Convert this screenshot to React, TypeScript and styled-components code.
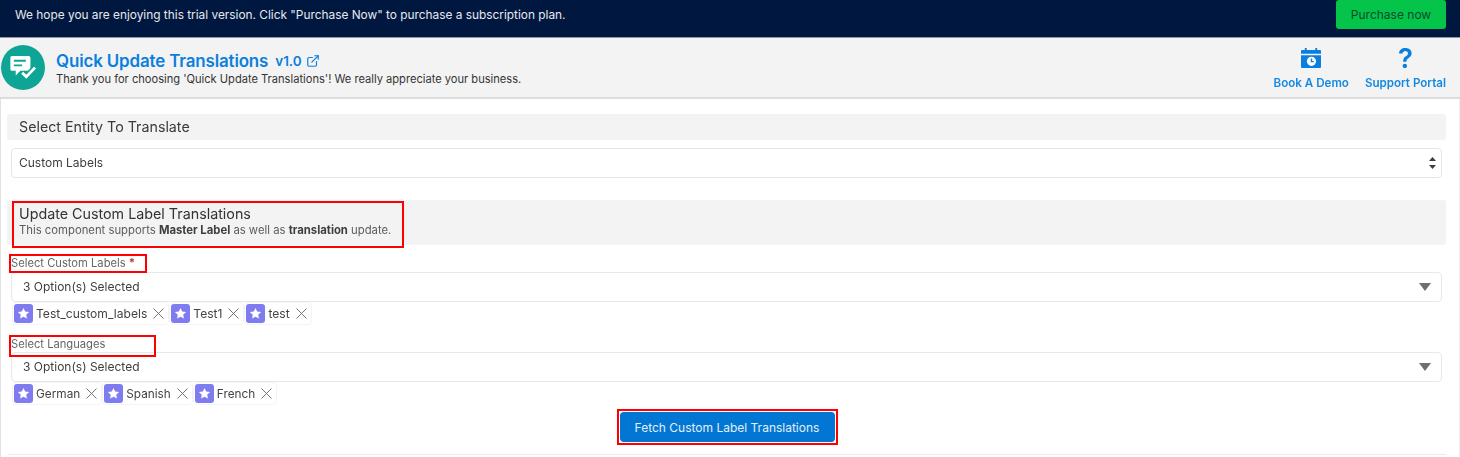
import React from 'react';
import styled, { createGlobalStyle } from 'styled-components';
import { X, ExternalLink } from 'lucide-react';

const FONT = '"Inter", "Liberation Sans", Arial, sans-serif';

const GlobalStyle = createGlobalStyle`
  html, body {
    margin: 0;
    padding: 0;
    background: #fff;
    font-family: ${FONT};
    color: #3e3e3c;
    overflow: hidden;
  }
  * { box-sizing: border-box; }
`;

const StarBadge = () => (
  <S.Badge>
    <svg width="13" height="13" viewBox="0 0 24 24" fill="#fff">
      <path d="M12 1.8l3.1 6.6 7.2.9-5.3 5 1.4 7.1L12 18l-6.4 3.4L7 14.300l-5.300-5 7.200-.9z" />
    </svg>
  </S.Badge>
);

const Pill = ({ text }: { text: string }) => (
  <S.Pill>
    <StarBadge />
    <S.PillText>{text}</S.PillText>
    <X size={19} color="#706e6b" strokeWidth={1.2} />
  </S.Pill>
);

const AppLogo = () => (
  <S.Logo>
    <svg width="30" height="28" viewBox="0 0 30 28">
      <path d="M2 0h18a2 2 0 0 1 2 2v12a2 2 0 0 1-2 2h-9l-5 5v-5H2a2 2 0 0 1-2-2V2a2 2 0 0 1 2-2z" fill="#fff" />
      <path d="M4 5h13M4 10h9" stroke="#0fa594" strokeWidth="2" />
      <path d="M13 18l4.500 4.500L27 12.500" fill="none" stroke="#0fa594" strokeWidth="6.500" />
      <path d="M13 18l4.500 4.500L27 12.500" fill="none" stroke="#fff" strokeWidth="3" />
    </svg>
  </S.Logo>
);

const CalendarIcon = () => (
  <svg width="20" height="20" viewBox="0 0 21 21">
    <path
      fill="#0b7fdd"
      fillRule="evenodd"
      d="M4 0h2v2h9V0h2v2h3a1 1 0 0 1 1 1v3H0V3a1 1 0 0 1 1-1h3zM0 7.500h21V20a1 1 0 0 1-1 1H1a1 1 0 0 1-1-1z"
    />
    <circle cx="11" cy="14" r="4.800" fill="#fff" />
    <path d="M11 11v3.300h2.400" fill="none" stroke="#0b7fdd" strokeWidth="1.500" />
  </svg>
);

const DownArrow = () => (
  <svg width="12" height="8" viewBox="0 0 12 8">
    <path d="M0 0h12L6 8z" fill="#706e6b" />
  </svg>
);

const App = () => {
  return (
    <S.Page>
      <GlobalStyle />
      <S.Banner>
        <S.BannerText>We hope you are enjoying this trial version. Click "Purchase Now" to purchase a subscription plan.</S.BannerText>
        <S.PurchaseButton>Purchase now</S.PurchaseButton>
      </S.Banner>
      <S.Header>
        <AppLogo />
        <S.TitleBlock>
          <S.TitleRow>
            <S.Title>Quick Update Translations</S.Title>
            <S.Version>v1.0</S.Version>
            <ExternalLink size={14} color="#0b7fdd" strokeWidth={2} />
          </S.TitleRow>
          <S.Subtitle>Thank you for choosing 'Quick Update Translations'! We really appreciate your business.</S.Subtitle>
        </S.TitleBlock>
        <S.HeaderActions>
          <S.HeaderAction>
            <S.ActionIcon><CalendarIcon /></S.ActionIcon>
            Book A Demo
          </S.HeaderAction>
          <S.HeaderAction>
            <S.QuestionMark>?</S.QuestionMark>
            Support Portal
          </S.HeaderAction>
        </S.HeaderActions>
      </S.Header>
      <S.Content>
        <S.EntityHeading>Select Entity To Translate</S.EntityHeading>
        <S.SelectBox>
          Custom Labels
          <S.Stepper>
            <svg width="7" height="14" viewBox="0 0 7 14">
              <path d="M3.500 1L7 5H0zM3.500 13L0 9h7z" fill="#3e3e3c" />
            </svg>
          </S.Stepper>
        </S.SelectBox>
        <S.UpdateHeading>
          <S.Annotated>
            <S.UpdateTitle>Update Custom Label Translations</S.UpdateTitle>
            <S.UpdateNote>
              This component supports <b>Master Label</b> as well as <b>translation</b> update.
            </S.UpdateNote>
          </S.Annotated>
        </S.UpdateHeading>
        <S.FieldLabel $top={11}>
          Select Custom Labels <S.Required>*</S.Required>
          <S.LabelMark $width={138} $height={19} />
        </S.FieldLabel>
        <S.Combo>
          3 Option(s) Selected
          <DownArrow />
        </S.Combo>
        <S.PillRow $size={12.1}>
          <Pill text="Test_custom_labels" />
          <Pill text="Test1" />
          <Pill text="test" />
        </S.PillRow>
        <S.FieldLabel $top={12}>
          Select Languages
          <S.LabelMark $width={147} $height={22} />
        </S.FieldLabel>
        <S.Combo>
          3 Option(s) Selected
          <DownArrow />
        </S.Combo>
        <S.PillRow $size={11.8}>
          <Pill text="German" />
          <Pill text="Spanish" />
          <Pill text="French" />
        </S.PillRow>
        <S.ButtonRow>
          <S.FetchMark>
            <S.FetchButton>Fetch Custom Label Translations</S.FetchButton>
          </S.FetchMark>
        </S.ButtonRow>
        <S.BottomCard />
      </S.Content>
    </S.Page>
  );
};

export default App;

const S = {
  Page: styled.div`
    filter: blur(0.35px);
  `,
  Banner: styled.div`
    height: 38px;
    background: #00183f;
    display: flex;
    align-items: flex-start;
    justify-content: space-between;
    padding: 0 14px 0 15px;
    border-bottom: 1px solid #8d99ab;
  `,
  BannerText: styled.div`
    margin-top: 8px;
    font-size: 11.870px;
    line-height: 15px;
    color: #e6e9ee;
  `,
  PurchaseButton: styled.div`
    width: 110px;
    height: 29px;
    background: #04c44a;
    border-radius: 3px;
    color: #0a4d2d;
    font-size: 12px;
    line-height: 29px;
    text-align: center;
  `,
  Header: styled.div`
    height: 61px;
    background: #f3f3f3;
    border-bottom: 2px solid #dcdcdc;
    display: flex;
    align-items: flex-start;
    padding: 7px 14px 0 1px;
  `,
  Logo: styled.div`
    width: 44px;
    height: 45px;
    border-radius: 50%;
    background: #0fa594;
    display: flex;
    align-items: center;
    justify-content: center;
    padding: 2px 0 0 2px;
    svg { transform: scale(0.92); }
  `,
  TitleBlock: styled.div`
    margin-left: 11px;
    padding-top: 7px;
  `,
  TitleRow: styled.div`
    display: flex;
    align-items: center;
    height: 18px;
    color: #0b7fdd;
    svg { margin-left: 4px; }
  `,
  Title: styled.div`
    font-size: 16.900px;
    font-weight: 600;
    letter-spacing: -0.12px;
  `,
  Version: styled.div`
    margin-left: 7px;
    font-size: 13.500px;
    font-weight: 600;
  `,
  Subtitle: styled.div`
    margin-top: 2px;
    font-size: 11.120px;
    line-height: 14px;
    color: #333;
  `,
  HeaderActions: styled.div`
    margin-left: auto;
    display: flex;
    gap: 16px;
  `,
  HeaderAction: styled.div`
    display: flex;
    flex-direction: column;
    align-items: center;
    font-size: 11.600px;
    font-weight: 600;
    line-height: 14px;
    color: #1589e0;
  `,
  ActionIcon: styled.div`
    height: 20px;
    margin-top: 3px;
    margin-bottom: 8px;
    line-height: 0;
  `,
  QuestionMark: styled.div`
    height: 31px;
    font-size: 27.500px;
    font-weight: 600;
    line-height: 26px;
    color: #0b7fdd;
  `,
  Content: styled.div`
    height: 358px;
    padding: 15px 13px 0 7px;
    border-left: 1px solid #e2e2e2;
    border-right: 1px solid #f0f0f0;
  `,
  EntityHeading: styled.div`
    height: 26px;
    background: #f3f3f3;
    border-radius: 3px;
    margin-left: -1px;
    padding-left: 12px;
    font-size: 14.250px;
    line-height: 26px;
    color: #3a3a3a;
  `,
  SelectBox: styled.div`
    position: relative;
    height: 30px;
    margin: 8px 4px 0 3px;
    border: 1px solid #e4e4e4;
    border-radius: 4px;
    padding-left: 7px;
    font-size: 12px;
    line-height: 28px;
  `,
  Stepper: styled.div`
    position: absolute;
    right: 5px;
    top: 7px;
    line-height: 0;
  `,
  UpdateHeading: styled.div`
    height: 45px;
    margin: 22px 0 0 -1px;
    background: #f3f3f3;
    border-radius: 3px;
    padding: 6px 0 0 12px;
  `,
  Annotated: styled.div`
    position: relative;
    &::after {
      content: '';
      position: absolute;
      box-sizing: border-box;
      left: -7px;
      top: -5px;
      width: 392px;
      height: 47px;
      border: 2px solid #f00;
    }
  `,
  UpdateTitle: styled.div`
    font-size: 14.300px;
    line-height: 16px;
    color: #333;
  `,
  UpdateNote: styled.div`
    margin-top: 2px;
    font-size: 11.300px;
    line-height: 13px;
    color: #5c5c5c;
    b { font-weight: 700; color: #3e3e3c; }
  `,
  FieldLabel: styled.div<{ $top: number }>`
    position: relative;
    height: ${(props) => 27 - props.$top}px;
    margin: ${(props) => props.$top}px 0 0 3px;
    font-size: 11.200px;
    line-height: 15px;
    color: #666;
  `,
  LabelMark: styled.span<{ $width: number; $height: number }>`
    position: absolute;
    left: -2px;
    top: -2px;
    width: ${(props) => props.$width}px;
    height: ${(props) => props.$height}px;
    border: 2px solid #f00;
  `,
  Required: styled.span`
    color: #c23934;
    font-weight: 700;
  `,
  Combo: styled.div`
    height: 30px;
    margin: 0 4px 0 3px;
    border: 1px solid #e8e8e8;
    border-radius: 4px;
    padding: 0 10px 1px 11px;
    display: flex;
    align-items: center;
    justify-content: space-between;
    font-size: 12px;
    color: #3e3e3c;
  `,
  PillRow: styled.div<{ $size: number }>`
    display: flex;
    height: 23px;
    margin-left: 4px;
    font-size: ${(props) => props.$size}px;
  `,
  Pill: styled.div`
    height: 23px;
    display: flex;
    align-items: center;
    border: 1px solid #f4f4f4;
    border-radius: 4px;
    padding-left: 1px;
  `,
  Badge: styled.div`
    width: 19px;
    height: 19px;
    border-radius: 3px;
    background: #7f7cf0;
    display: flex;
    align-items: center;
    justify-content: center;
  `,
  PillText: styled.span`
    margin: 0 2px 0 3px;
    color: #444;
  `,
  ButtonRow: styled.div`
    display: flex;
    justify-content: center;
    margin-top: 4px;
  `,
  FetchMark: styled.div`
    width: 221px;
    height: 36px;
    border: 2px solid #f00;
    padding: 1px;
    background: #fff;
  `,
  FetchButton: styled.div`
    height: 100%;
    background: #0176d3;
    border-radius: 4px;
    color: #e4effa;
    font-size: 12px;
    line-height: 31px;
    text-align: center;
  `,
  BottomCard: styled.div`
    height: 1px;
    margin-top: 9px;
    background: #ededed;
  `
};
